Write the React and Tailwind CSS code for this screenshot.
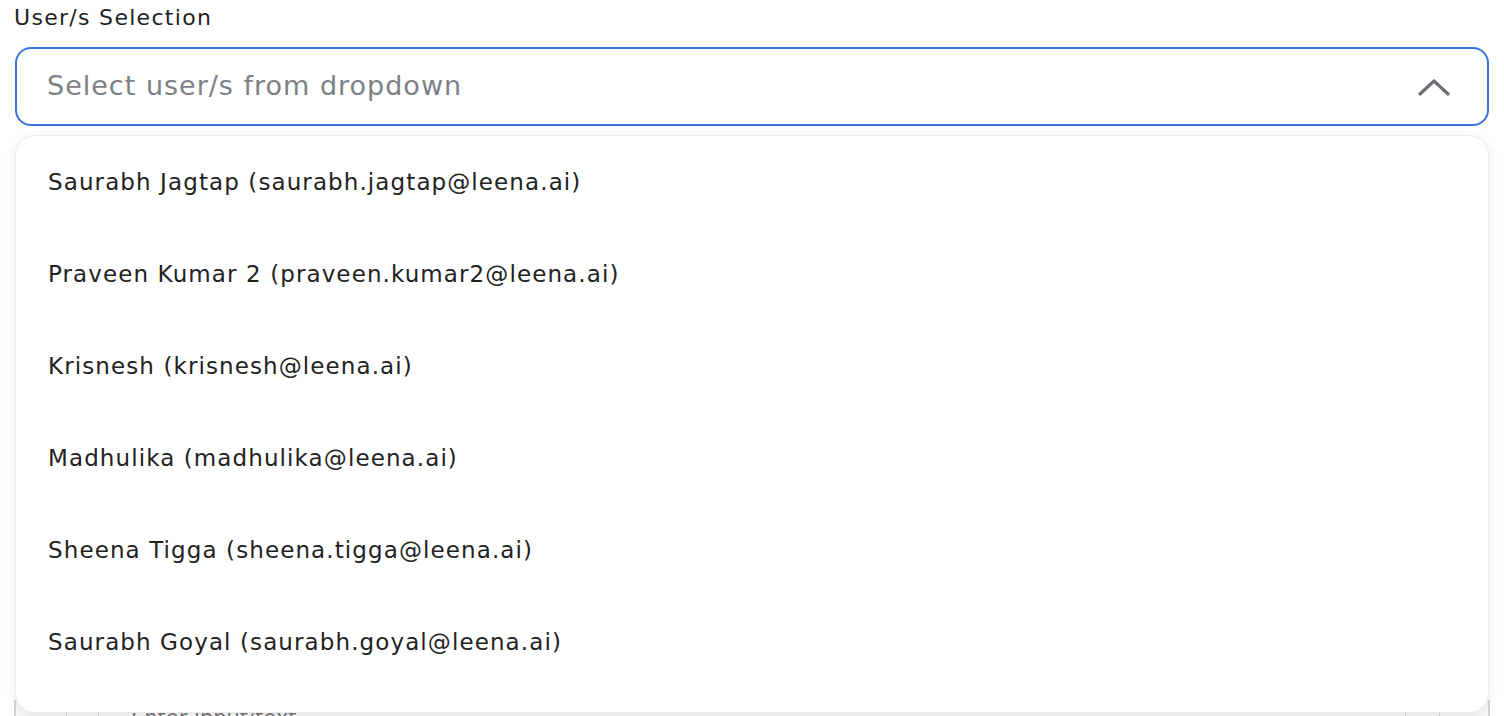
const users = [
  "Saurabh Jagtap (saurabh.jagtap@leena.ai)",
  "Praveen Kumar 2 (praveen.kumar2@leena.ai)",
  "Krisnesh (krisnesh@leena.ai)",
  "Madhulika (madhulika@leena.ai)",
  "Sheena Tigga (sheena.tigga@leena.ai)",
  "Saurabh Goyal (saurabh.goyal@leena.ai)",
];

function ChevronUp() {
  return (
    <svg width="32" height="18" viewBox="0 0 32 18" fill="none">
      <polyline
        points="2,16 16,3 30,16"
        stroke="#6b6e73"
        strokeWidth="3.2"
        strokeLinecap="round"
        strokeLinejoin="round"
      />
    </svg>
  );
}

export default function App() {
  return (
    <div
      className="w-[1504px] h-[716px] overflow-hidden bg-white px-[14px]"
      style={{ fontFamily: '"DejaVu Sans", sans-serif' }}
    >
      {/* label */}
      <div className="h-[47px] pt-[2px] text-[22px] leading-[32px] tracking-[1.3px] text-[#1f1f1f]">
        User/s Selection
      </div>

      {/* select + dropdown */}
      <div className="relative">
        <div className="mx-px h-[79px] rounded-[16px] border-2 border-[#3a74e0] flex items-center justify-between pl-[30px] pr-[37px]">
          <span className="text-[27px] tracking-[1px] text-[#7d8085]">Select user/s from dropdown</span>
          <ChevronUp />
        </div>

        {/* menu */}
        <div className="absolute z-10 top-[88px] left-px right-px rounded-[20px] border border-[#ececec] bg-white shadow-[0_2px_12px_rgba(0,0,0,0.08)] pb-[24px]">
          {users.map((u) => (
            <div
              key={u}
              className="h-[92px] flex items-center pl-[32px] text-[23px] tracking-[1.1px] text-[#222222]"
            >
              {u}
            </div>
          ))}
        </div>

        {/* content sitting behind the open menu */}
        <div className="mt-[574px] h-[60px] border-x-2 border-[#d4d4d4] bg-[#f6f6f6] flex items-start">
          <div className="w-[50px] h-full" />
          <div className="w-[33px] h-full border-x border-[#cfcfcf]" />
          <span className="pl-[32px] pt-[3px] text-[21px] text-[#777]">Enter input/text</span>
          <div className="flex-1" />
          <div className="w-[35px] h-full border-x border-[#cfcfcf] mr-[48px]" />
        </div>
      </div>
    </div>
  );
}
